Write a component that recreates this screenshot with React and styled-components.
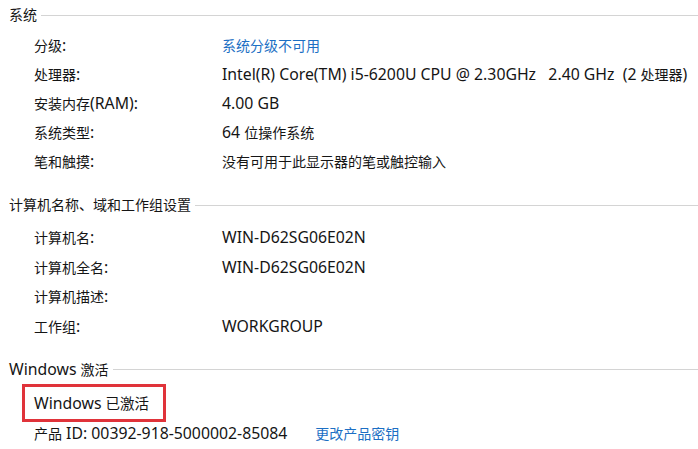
import React from "react";
import styled, { createGlobalStyle } from "styled-components";

const GlobalStyle = createGlobalStyle`
  html, body {
    margin: 0;
    padding: 0;
    background: #ffffff;
  }
  body {
    font-family: "Noto Sans CJK SC", "Noto Sans", sans-serif;
    color: #151515;
  }
`;

// Latin runs are set a little larger, the way YaHei draws them
const CJK = /([\u3000-\u9fff\uff00-\uffef]+)/;
function mix(text) {
  return text
    .split(CJK)
    .filter(Boolean)
    .map((part, i) => (CJK.test(part) ? <span key={i}>{part}</span> : <Lat key={i}>{part}</Lat>));
}

const systemRows = [
  { label: "分级:", value: "系统分级不可用", link: true },
  { label: "处理器:", value: "Intel(R) Core(TM) i5-6200U CPU @ 2.30GHz   2.40 GHz  (2 处理器)" },
  { label: "安装内存(RAM):", value: "4.00 GB" },
  { label: "系统类型:", value: "64 位操作系统" },
  { label: "笔和触摸:", value: "没有可用于此显示器的笔或触控输入" },
];

const computerRows = [
  { label: "计算机名:", value: "WIN-D62SG06E02N" },
  { label: "计算机全名:", value: "WIN-D62SG06E02N" },
  { label: "计算机描述:", value: "" },
  { label: "工作组:", value: "WORKGROUP" },
];

function App() {
  return (
    <Page>
      <GlobalStyle />
      <Section>
        <Header>
          <span>系统</span>
        </Header>
        <Rows $top={6}>
          {systemRows.map((r) => (
            <Row key={r.label}>
              <Label>{mix(r.label)}</Label>
              <Value $link={r.link}>{mix(r.value)}</Value>
            </Row>
          ))}
        </Rows>
      </Section>

      <Section $top={19}>
        <Header>
          <span>计算机名称、域和工作组设置</span>
        </Header>
        <Rows $top={8}>
          {computerRows.map((r) => (
            <Row key={r.label} $height={29.7}>
              <Label>{mix(r.label)}</Label>
              <Value>{mix(r.value)}</Value>
            </Row>
          ))}
        </Rows>
      </Section>

      <Section $top={18}>
        <Header>
          <span>{mix("Windows 激活")}</span>
        </Header>
        <Activated>{mix("Windows 已激活")}</Activated>
        <ProductRow>
          <span>{mix("产品 ID: 00392-918-5000002-85084")}</span>
          <Value $link>更改产品密钥</Value>
        </ProductRow>
      </Section>
    </Page>
  );
}

const Page = styled.div`
  width: 698px;
  height: 449px;
  overflow: hidden;
  padding: 4px 0 0 9px;
  box-sizing: border-box;
  font-size: 14px;
`;

const Lat = styled.span`
  font-family: "Noto Sans", sans-serif;
  font-size: 15.8px;
`;

const Section = styled.div`
  margin-top: ${(p) => p.$top || 0}px;
`;

const Header = styled.div`
  display: flex;
  align-items: center;
  gap: 4px;
  height: 20px;
  font-size: 14px;
  white-space: pre;
  &::after {
    content: "";
    flex: 1;
    height: 1px;
    background: #d4d4d4;
    margin-top: 2px;
  }
`;

const Rows = styled.div`
  margin-top: ${(p) => p.$top || 0}px;
  padding-left: 25px;
`;

const Row = styled.div`
  display: flex;
  align-items: center;
  height: ${(p) => p.$height || 29}px;
`;

const Label = styled.div`
  width: 188px;
  white-space: pre;
`;

const Value = styled.div`
  white-space: pre;
  color: ${(p) => (p.$link ? "#1c6fc4" : "#151515")};
`;

const Activated = styled.div`
  margin: 5px 0 0 13px;
  width: 144px;
  height: 38px;
  box-sizing: border-box;
  border: 3px solid #e0333a;
  display: flex;
  align-items: center;
  padding-left: 9px;
  white-space: pre;
  font-size: 14.5px;
`;

const ProductRow = styled.div`
  display: flex;
  align-items: center;
  gap: 28px;
  margin: 0 0 0 25px;
  height: 22px;
  white-space: pre;
`;

export default App;
